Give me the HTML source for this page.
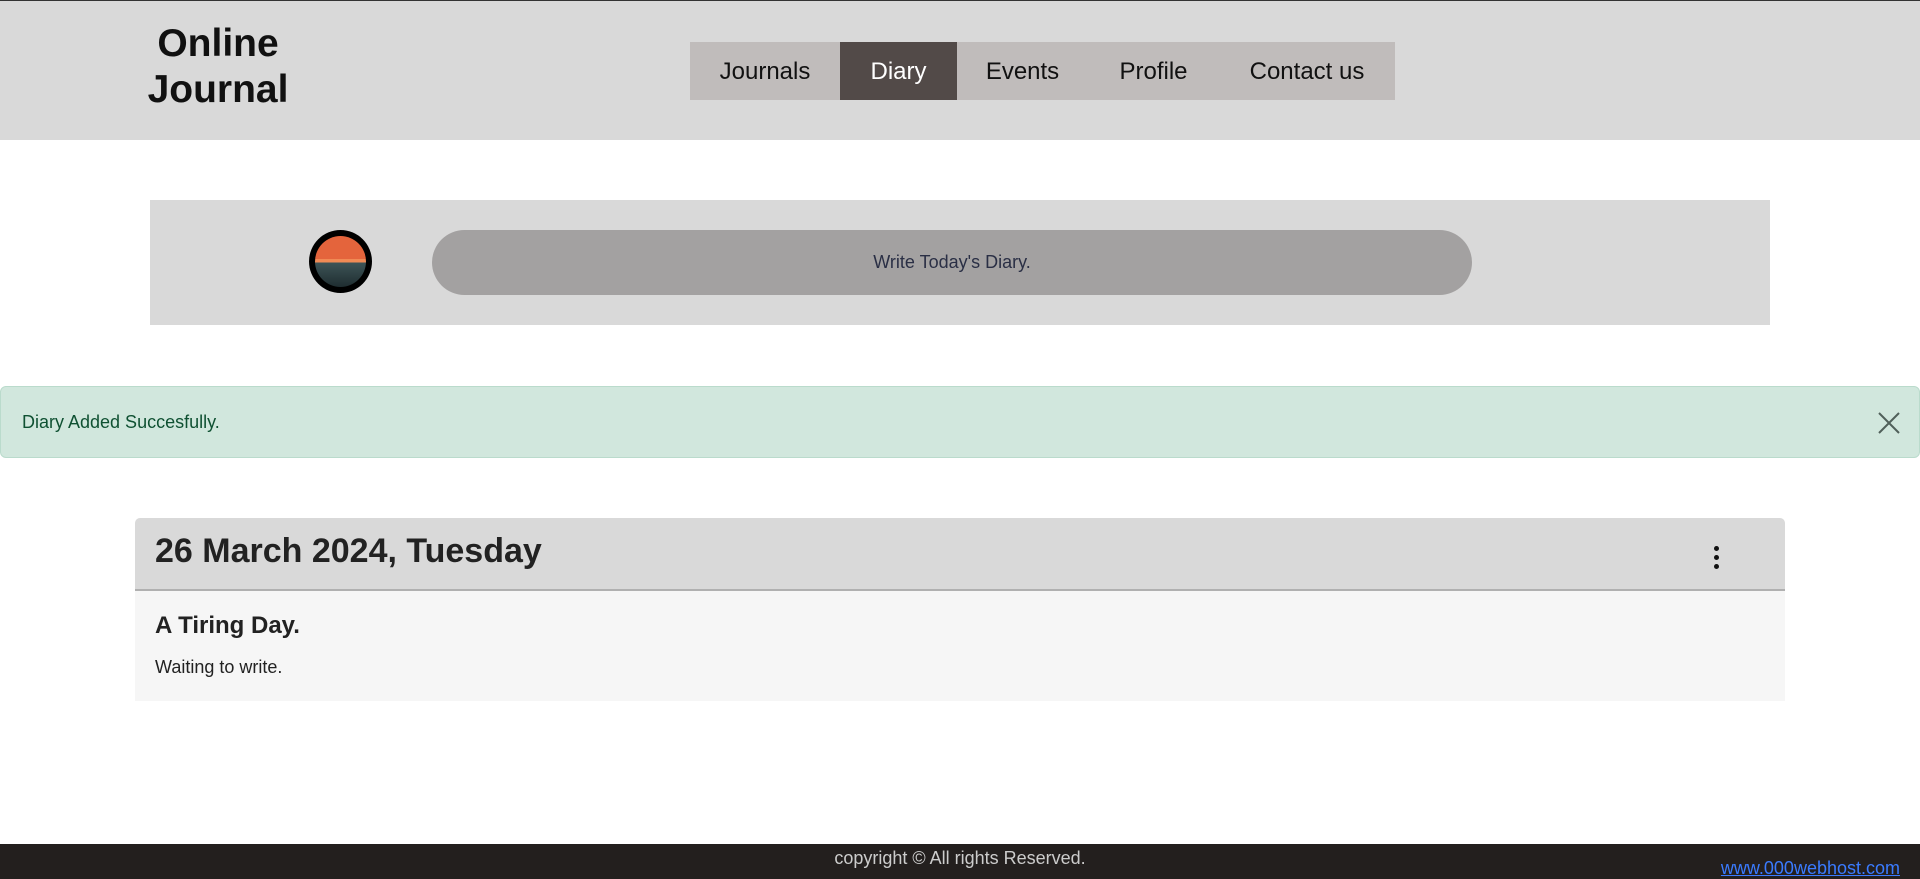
<!DOCTYPE html>
<html><head><meta charset="utf-8"><style>
*{box-sizing:border-box;margin:0;padding:0}
body{width:1920px;height:878px;overflow:hidden;background:#fff;font-family:"Liberation Sans",sans-serif;color:#212529;position:relative;border-top:1px solid #333}
.hdr{position:absolute;left:0;top:0;width:1920px;height:139px;background:#d9d9d9}
.logo{position:absolute;left:118px;top:20px;width:200px;text-align:center;font-size:39px;line-height:46px;font-weight:600;color:#111}
.nav{position:absolute;left:690px;top:41px;height:58px;width:705px;background:#c0bcbb;display:flex}
.nav div{height:58px;line-height:60px;font-size:24px;color:#111;text-align:center}
.nav .a{background:#524a48;color:#fff}
.comp{position:absolute;left:150px;top:199px;width:1620px;height:125px;background:#d9d9d9}
.av{position:absolute;left:309px;top:229px;width:63px;height:63px;border-radius:50%;background:#000}
.av i{position:absolute;left:6px;top:6px;width:51px;height:51px;border-radius:50%;background:linear-gradient(#e4643c 0 45%,#f08a55 45% 52%,#3d5457 52%,#1f2d30);overflow:hidden}
.pill{position:absolute;left:432px;top:229px;width:1040px;height:65px;border-radius:33px;background:#a3a1a1;text-align:center;line-height:65px;font-size:18px;color:#2a2f45}
.alert{position:absolute;left:0;top:385px;width:1920px;height:72px;background:#d1e7dd;border:1px solid #badbcc;border-radius:6px;color:#0f5132;font-size:18px;line-height:70px;padding-left:21px}
.x{position:absolute;right:18px;top:24px;width:24px;height:24px}
.card{position:absolute;left:135px;top:517px;width:1650px;height:183px;background:#f6f6f6;border-radius:5px 5px 0 0;overflow:hidden}
.ch{height:73px;background:#d9d9d9;border-bottom:2px solid #b0b0b0;font-size:34px;font-weight:600;line-height:66px;padding-left:20px;color:#222}
.dots{position:absolute;left:1579px;top:28px;width:5px}
.dots b{display:block;width:5px;height:5px;border-radius:50%;background:#111;margin-bottom:4px}
.ct{position:absolute;left:20px;top:94px;font-size:24px;font-weight:600;color:#222}
.cp{position:absolute;left:20px;top:139px;font-size:18px;color:#222}
.ft{position:absolute;left:0;top:843px;width:1920px;height:35px;background:#231f1e;color:#ccc;text-align:center;font-size:18px;line-height:28px}
.lnk{position:absolute;right:20px;top:858px;color:#3a7bff;text-decoration:underline;font-size:18px;line-height:18px}
</style></head><body>
<div class="hdr">
<div class="logo">Online<br>Journal</div>
<div class="nav"><div style="width:150px">Journals</div><div class="a" style="width:117px">Diary</div><div style="width:131px">Events</div><div style="width:131px">Profile</div><div style="width:176px">Contact us</div></div>
</div>
<div class="comp"></div>
<div class="av"><i></i></div>
<div class="pill">Write Today's Diary.</div>
<div class="alert">Diary Added Succesfully.
<svg class="x" viewBox="0 0 24 24"><path d="M2 2L22 22M22 2L2 22" stroke="#50605a" stroke-width="2"/></svg></div>
<div class="card"><div class="ch">26 March 2024, Tuesday</div>
<div class="dots"><b></b><b></b><b></b></div>
<div class="ct">A Tiring Day.</div><div class="cp">Waiting to write.</div></div>
<div class="ft">copyright © All rights Reserved.</div>
<div class="lnk">www.000webhost.com</div>
</body></html>
